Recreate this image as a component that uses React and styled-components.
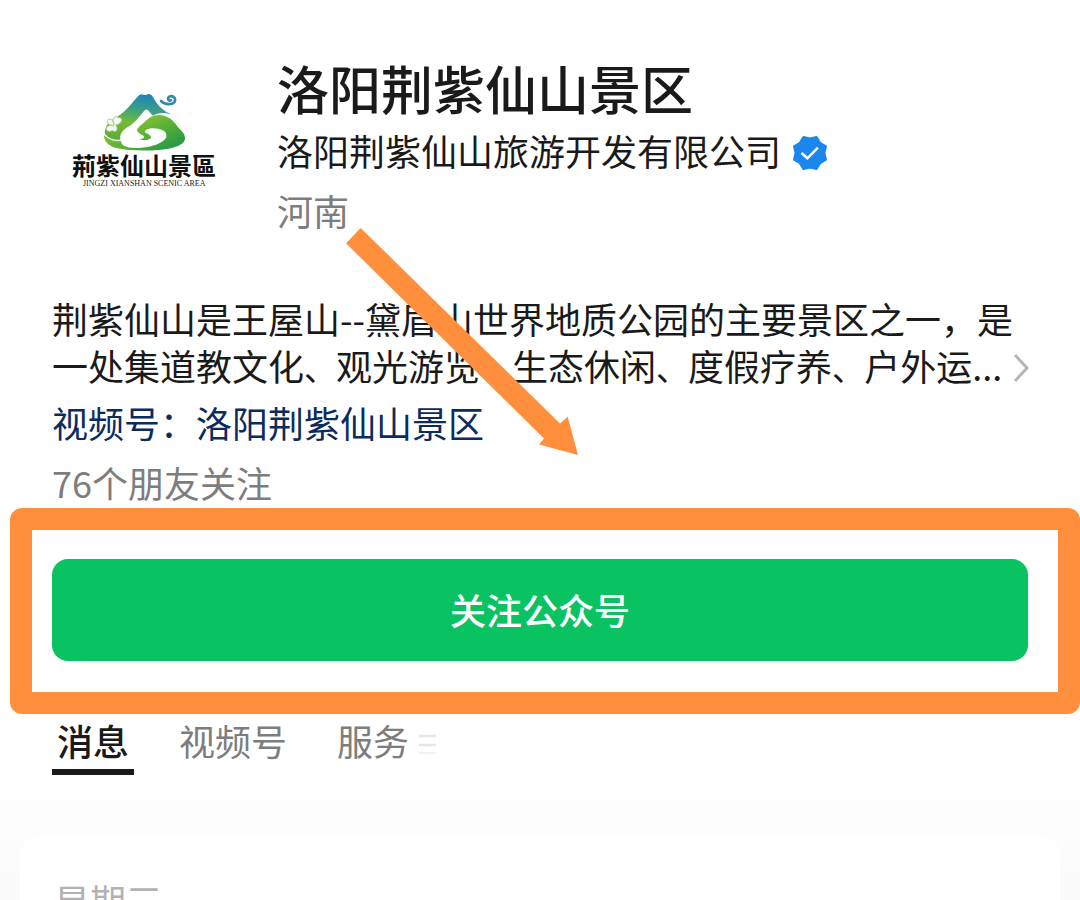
import React, { Fragment } from 'react';
import styled, { createGlobalStyle } from 'styled-components';

const sans = '"Noto Sans CJK SC", "Noto Sans", sans-serif';
const ink = '#1a1a1a';
const muted = '#7d7d7d';
const orange = '#ff8f3c';

const GlobalStyle = createGlobalStyle`
  * { box-sizing: border-box; }
  body {
    margin: 0;
    background: #fff;
    font-family: ${sans};
    color: ${ink};
  }
  button { font-family: inherit; color: inherit; border: 0; background: none; padding: 0; cursor: pointer; }
`;

const Page = styled.main`
  position: relative;
  height: 100vh;
  min-height: 600px;
  overflow: hidden;
  padding-top: 56px;
  display: flex;
  flex-direction: column;
  background: linear-gradient(#fff 760px, #fafafa 900px);
`;

const Header = styled.header`
  display: flex;
  gap: 57px;
  padding: 0 52px 0 68px;
`;

const Logo = styled.svg`
  flex: none;
  width: 152px;
  height: 104px;
  margin-top: 32px;
`;

const Identity = styled.div`
  min-width: 0;
`;

const Title = styled.h1`
  margin: 0;
  font-size: 52px;
  line-height: 64px;
  font-weight: 500;
  white-space: nowrap;
`;

const Company = styled.div`
  display: flex;
  align-items: center;
  gap: 10px;
  font-size: 36px;
  line-height: 60px;
  white-space: nowrap;
`;

const Badge = styled.svg`
  width: 38px;
  height: 38px;
  margin-top: 6px;
`;

const Region = styled.div`
  font-size: 36px;
  line-height: 60px;
  color: ${muted};
`;

const About = styled.section`
  padding: 55px 52px 0;
  display: flex;
  flex-direction: column;
  align-items: stretch;
`;

const Description = styled.button`
  display: flex;
  align-items: flex-end;
  justify-content: space-between;
  width: 100%;
  font-size: 36px;
  line-height: 47px;
  text-align: left;
`;

const Line = styled.span`
  display: block;
  white-space: nowrap;
`;

const Pause = styled.span`
  font-size: 32px;
`;

const Chevron = styled.svg`
  flex: none;
  width: 16px;
  height: 30px;
  margin-bottom: 8px;
`;

const ChannelLink = styled.a`
  margin-top: 8px;
  font-size: 36px;
  line-height: 46px;
  color: #0c2b5e;
  text-decoration: none;
  align-self: flex-start;
`;

const Friends = styled.p`
  margin: 14px 0 0;
  font-size: 36px;
  line-height: 46px;
  color: ${muted};
`;

const Highlight = styled.div`
  margin: 3px 0 0 10px;
  padding: 29px 30px 31px 20px;
  border: 22px solid ${orange};
  border-radius: 12px;
`;

const FollowButton = styled.button`
  display: block;
  width: 100%;
  height: 102px;
  padding-bottom: 2px;
  border-radius: 16px;
  background: #09c261;
  color: #fff;
  font-size: 36px;
  font-weight: 500;
`;

const Tabs = styled.nav`
  display: flex;
  align-items: flex-start;
  padding: 2px 52px 0;
  gap: 40px;
`;

const Tab = styled.button`
  display: flex;
  align-items: center;
  gap: 10px;
  padding: 0 5px 4px;
  font-size: 36px;
  line-height: 49px;
  font-weight: ${(p) => (p.$active ? 500 : 400)};
  color: ${(p) => (p.$active ? ink : muted)};
  border-bottom: 6px solid ${(p) => (p.$active ? ink : 'transparent')};
`;

const MenuIcon = styled.svg`
  width: 17px;
  height: 22px;
  margin-top: 6px;
`;

const Card = styled.section`
  flex: none;
  margin: 61px 20px 0;
  padding: 40px 34px;
  border-radius: 20px;
  background: #fff;
`;

const Day = styled.h2`
  margin: 0;
  font-size: 36px;
  line-height: 48px;
  font-weight: 400;
  color: #b2b2b2;
`;

const Arrow = styled.svg`
  position: absolute;
  left: 340px;
  top: 220px;
  width: 250px;
  height: 245px;
  pointer-events: none;
`;

const secondLine = '一处集道教文化、观光游览、生态休闲、度假疗养、户外运...'.split('、');

function ScenicLogo() {
  return (
    <Logo viewBox="0 0 152 104" role="img" aria-label="荊紫仙山景區">
      <defs>
        <linearGradient id="peak" gradientUnits="userSpaceOnUse" x1="150" y1="25" x2="130" y2="165">
          <stop offset="0" stopColor="#1a83bd" />
          <stop offset="0.35" stopColor="#3a9f86" />
          <stop offset="0.65" stopColor="#74b93a" />
          <stop offset="1" stopColor="#5cb03a" />
        </linearGradient>
        <linearGradient id="slope" gradientUnits="userSpaceOnUse" x1="150" y1="90" x2="200" y2="195">
          <stop offset="0" stopColor="#86c232" />
          <stop offset="0.5" stopColor="#58b038" />
          <stop offset="1" stopColor="#2f9b45" />
        </linearGradient>
      </defs>
      <g transform="translate(27 -3) scale(0.3333)">
        <path
          d="M55 102 C85 88 108 58 127 36 Q135 25 144 29 Q152 32 160 27 Q170 27 176 40 C190 66 208 80 234 90 C212 82 190 82 174 92 C168 90 160 72 152 74 C142 80 126 108 108 120 C92 130 72 140 76 164 C56 166 40 160 30 146 C26 132 40 110 55 102Z"
          fill="url(#peak)"
        />
        <path
          d="M134 124 C150 112 162 92 188 90 C214 88 234 104 246 122 C256 136 272 144 270 162 C266 184 226 192 190 195 C150 198 100 197 68 190 C40 184 26 168 27 150 C42 166 62 170 78 168 C78 180 92 189 120 189 C160 190 206 176 214 156 C218 138 196 130 174 130 C158 130 144 138 152 144 C164 148 174 156 164 162 C154 167 142 166 130 163 C148 162 152 156 142 150 C130 144 118 138 134 124Z"
          fill="url(#slope)"
        />
        <path
          d="M58 120 C46 98 64 90 70 98 C88 98 80 116 62 120 C72 132 62 146 52 136 C42 144 28 134 36 126 C42 120 50 120 56 122 C38 122 32 106 42 102 C52 102 56 110 58 120Z"
          fill="#f4faee"
          stroke="#a9d28e"
          strokeWidth="3"
        />
        <path
          d="M198 48 C210 60 232 60 239 50 C244 38 232 30 223 35 C216 40 220 49 228 46"
          fill="none"
          stroke="#3389ad"
          strokeWidth="8"
          strokeLinecap="round"
        />
      </g>
      <text x="4" y="87" fontSize="24" fontWeight="700" fill="#111" fontFamily='"Noto Sans CJK TC", sans-serif'>荊紫仙山景區</text>
      <text x="15" y="98" fontSize="8" fill="#222" fontFamily='"Liberation Serif", serif'>JINGZI XIANSHAN SCENIC AREA</text>
    </Logo>
  );
}

export default function App() {
  return (
    <>
      <GlobalStyle />
      <Page>
        <Header>
          <ScenicLogo />
          <Identity>
            <Title>洛阳荆紫仙山景区</Title>
            <Company>
              洛阳荆紫仙山旅游开发有限公司
              <Badge viewBox="0 0 36 36" aria-hidden="true">
                <polygon
                  points="33.1,24.2 27.6,27.6 24.2,33.1 18,31.6 11.8,33.1 8.4,27.6 2.9,24.2 4.4,18 2.9,11.8 8.4,8.4 11.8,2.9 18,4.4 24.2,2.9 27.6,8.4 33.1,11.8 31.6,18"
                  fill="#1b87ee"
                  stroke="#1b87ee"
                  strokeWidth="2"
                  strokeLinejoin="round"
                />
                <path d="M10 18 L15.5 23 L25.5 13" fill="none" stroke="#fff" strokeWidth="2.4" />
              </Badge>
            </Company>
            <Region>河南</Region>
          </Identity>
        </Header>

        <About>
          <Description type="button">
            <span>
              <Line>荆紫仙山是王屋山--黛眉山世界地质公园的主要景区之一，是</Line>
              <Line>
                {secondLine.map((part, i) => (
                  <Fragment key={part}>
                    {i > 0 && <Pause>、</Pause>}
                    {part}
                  </Fragment>
                ))}
              </Line>
            </span>
            <Chevron viewBox="0 0 16 30" aria-hidden="true">
              <path d="M2 2 L14 15 L2 28" fill="none" stroke="#b5b5b5" strokeWidth="3" />
            </Chevron>
          </Description>
          <ChannelLink href="#channel">视频号：洛阳荆紫仙山景区</ChannelLink>
          <Friends>76个朋友关注</Friends>
        </About>

        <Highlight>
          <FollowButton type="button">关注公众号</FollowButton>
        </Highlight>

        <Tabs>
          <Tab type="button" $active>消息</Tab>
          <Tab type="button">视频号</Tab>
          <Tab type="button">
            服务
            <MenuIcon viewBox="0 0 17 22" aria-hidden="true">
              <path d="M0 3H17M0 12H17" stroke="#e6e6e6" strokeWidth="2.5" />
              <path d="M0 20H17" stroke="#e6e6e6" strokeWidth="1" />
            </MenuIcon>
          </Tab>
        </Tabs>

        <Card>
          <Day>星期三</Day>
        </Card>

        <Arrow viewBox="0 0 250 245" aria-hidden="true">
          <polygon points="20.7,8 6,23.3 204,218.5 199,224.5 238,235 227.7,196.7 220,203.5" fill={orange} />
        </Arrow>
      </Page>
    </>
  );
}
